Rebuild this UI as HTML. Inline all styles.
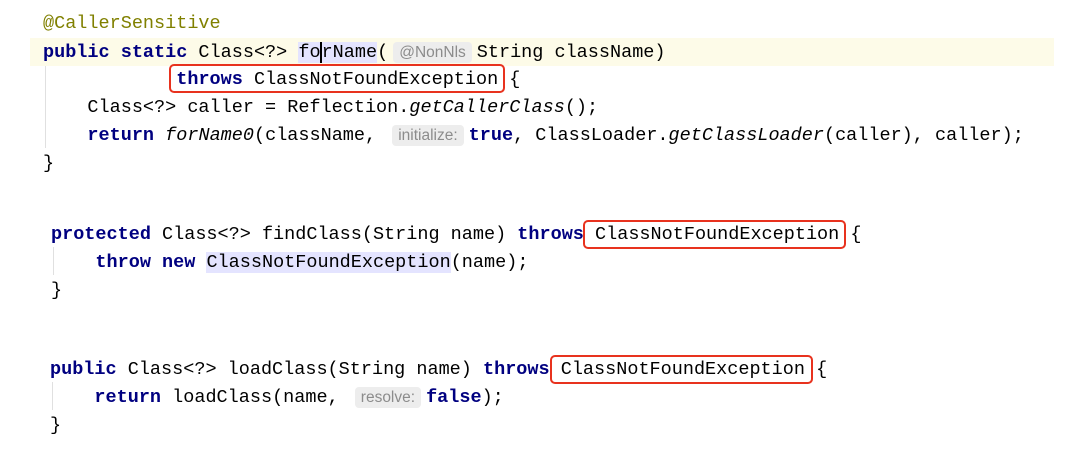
<!DOCTYPE html>
<html><head><style>
body{margin:0;width:1080px;height:473px;background:#fff;position:relative;overflow:hidden;font-family:"Liberation Mono",monospace;font-size:18.5px;color:#000}
.l{position:absolute;white-space:pre;line-height:28px;height:28px}
.k{color:#000080;font-weight:bold}
.a{color:#808000}
.i{font-style:italic}
.h{font-family:"Liberation Sans",sans-serif;font-size:15.5px;color:#8c8c8c;background:#ededed;border-radius:4px;padding:2px 6px;margin:0 5px}
.hl{background:#e4e4ff}
.box{position:absolute;border:2.5px solid #e8321e;border-radius:5px;box-sizing:border-box}
.g{position:absolute;width:1px;background:#e0e0e0}
</style></head><body>
<div style="position:absolute;left:30px;top:38px;width:1024px;height:28px;background:#fdfbe8"></div>
<div class="l a" style="left:43px;top:10px">@CallerSensitive</div>
<div class="l" style="left:43px;top:39px"><span class="k">public static</span> Class&lt;?&gt; <span class="hl">fo</span><span class="hl" style="border-left:2px solid #000;margin-left:-1px">rName</span>(<span class="h">@NonNls</span>String className)</div>
<div class="l" style="left:43px;top:66px">            <span class="k">throws</span> ClassNotFoundException {</div>
<div class="l" style="left:43px;top:94px">    Class&lt;?&gt; caller = Reflection.<span class="i">getCallerClass</span>();</div>
<div class="l" style="left:43px;top:122px">    <span class="k">return</span> <span class="i">forName0</span>(className, <span class="h">initialize:</span><span class="k">true</span>, ClassLoader.<span class="i">getClassLoader</span>(caller), caller);</div>
<div class="l" style="left:43px;top:150px">}</div>
<div class="g" style="left:45px;top:66px;height:82px"></div>

<div class="l" style="left:51px;top:221px"><span class="k">protected</span> Class&lt;?&gt; findClass(String name) <span class="k">throws</span> ClassNotFoundException {</div>
<div class="l" style="left:51px;top:249px">    <span class="k">throw new</span> <span class="hl">ClassNotFoundException</span>(name);</div>
<div class="l" style="left:51px;top:277px">}</div>
<div class="g" style="left:53px;top:247px;height:28px"></div>

<div class="l" style="left:50px;top:356px"><span class="k">public</span> Class&lt;?&gt; loadClass(String name) <span class="k">throws</span> ClassNotFoundException {</div>
<div class="l" style="left:50px;top:384px">    <span class="k">return</span> loadClass(name, <span class="h">resolve:</span><span class="k">false</span>);</div>
<div class="l" style="left:50px;top:412px">}</div>
<div class="g" style="left:52px;top:382px;height:28px"></div>

<div class="box" style="left:169px;top:64px;width:336px;height:29px"></div>
<div class="box" style="left:583px;top:220px;width:263px;height:29px"></div>
<div class="box" style="left:550px;top:355px;width:263px;height:29px"></div>
</body></html>
